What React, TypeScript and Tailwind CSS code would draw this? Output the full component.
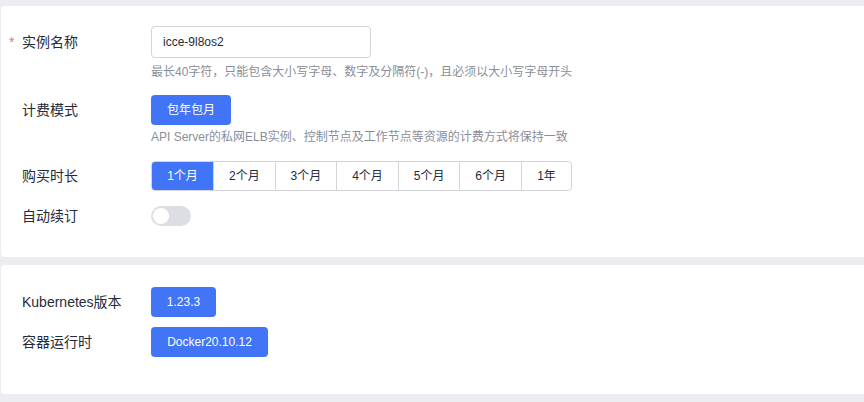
import React from "react"

const font = { fontFamily: '"Liberation Sans", "Noto Sans CJK SC", sans-serif' }

const durations = ["1个月", "2个月", "3个月", "4个月", "5个月", "6个月", "1年"]

function Label({ text, required, h }: { text: string; required?: boolean; h: string }) {
  return (
    <div className={`relative flex w-[150px] shrink-0 items-center self-start pl-[21px] text-sm text-[#252b3a] ${h}`}>
      {required && <span className="absolute left-[8px] text-[#f66f6a]">*</span>}
      {text}
    </div>
  )
}

export default function App() {
  return (
    <div className="min-h-[402px] bg-[#ebedf1] pt-[6px] pl-[1px] pb-[8px]" style={font}>
      {/* 基本信息 */}
      <div className="h-[251px] rounded-l-[4px] bg-white pt-[20px]">
        <div className="flex">
          <Label text="实例名称" required h="h-8" />
          <div>
            <div className="flex h-8 w-[220px] items-center rounded-[4px] border border-[#d3d5da] px-[11px] text-xs text-[#252b3a]">
              icce-9l8os2
            </div>
            <div className="mt-[6px] text-xs leading-4 text-[#8a8e99]">
              最长40字符，只能包含大小写字母、数字及分隔符(-)，且必须以大小写字母开头
            </div>
          </div>
        </div>

        <div className="mt-[15px] flex">
          <Label text="计费模式" h="h-[30px]" />
          <div>
            <div className="flex h-[30px] w-[80px] items-center justify-center rounded-[4px] bg-[#4174f6] text-xs text-white">
              包年包月
            </div>
            <div className="mt-[4px] text-xs leading-4 text-[#8a8e99]">
              API Server的私网ELB实例、控制节点及工作节点等资源的计费方式将保持一致
            </div>
          </div>
        </div>

        <div className="mt-[16px] flex h-[30px]">
          <Label text="购买时长" h="h-[30px]" />
          <div className="flex h-[30px] overflow-hidden rounded-[4px] border border-[#d3d5da] text-xs">
            {durations.map((d, i) => (
              <div
                key={d}
                className={
                  i === 0
                    ? "flex w-[61px] items-center justify-center bg-[#4174f6] text-white"
                    : i === durations.length - 1
                      ? "flex w-[50px] items-center justify-center border-l border-[#d3d5da] text-[#252b3a]"
                      : "flex w-[61.6px] items-center justify-center border-l border-[#d3d5da] text-[#252b3a]"
                }
              >
                {d}
              </div>
            ))}
          </div>
        </div>

        <div className="mt-[15px] flex h-[20px]">
          <Label text="自动续订" h="h-[20px]" />
          <div className="flex h-[20px] w-[40px] items-center rounded-full bg-[#dcdee3] px-[2px]">
            <div className="h-[16px] w-[16px] rounded-full bg-white" />
          </div>
        </div>
      </div>

      {/* 版本信息 */}
      <div className="mt-[8px] h-[129px] rounded-l-[4px] bg-white pt-[22px]">
        <div className="flex h-[30px]">
          <Label text="Kubernetes版本" h="h-[30px]" />
          <div className="flex h-[30px] w-[65px] items-center justify-center rounded-[4px] bg-[#4174f6] text-xs text-white">
            1.23.3
          </div>
        </div>
        <div className="mt-[10px] flex h-[30px]">
          <Label text="容器运行时" h="h-[30px]" />
          <div className="flex h-[30px] w-[117px] items-center justify-center rounded-[4px] bg-[#4174f6] text-xs text-white">
            Docker20.10.12
          </div>
        </div>
      </div>
    </div>
  )
}
